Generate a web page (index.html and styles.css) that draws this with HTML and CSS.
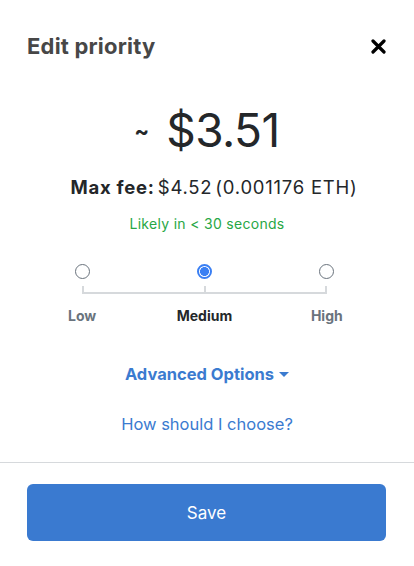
FILE: index.html
```html
<!DOCTYPE html>
<html>
<head>
<meta charset="utf-8">
<link rel="stylesheet" href="styles.css">
</head>
<body>
<div class="popover">
  <div class="header">
    <h2 class="title">Edit priority</h2>
    <button class="close" aria-label="Close">
      <svg width="15" height="15" viewBox="0 0 15 15"><path d="M2 2 L13 13 M13 2 L2 13" stroke="#000" stroke-width="3.2" stroke-linecap="round"/></svg>
    </button>
  </div>
  <div class="content">
    <div class="price"><span class="tilde">~</span><span class="amount">$3.51</span></div>
    <div class="fee"><span class="fee-label">Max fee:</span><span class="fee-val">$4.52</span><span class="fee-eth">(0.001176 ETH)</span></div>
    <div class="likely">Likely in &lt; 30 seconds</div>
    <div class="slider">
      <div class="radios">
        <div class="cell"><span class="radio"></span></div>
        <div class="cell"><span class="radio checked"></span></div>
        <div class="cell"><span class="radio"></span></div>
      </div>
      <div class="track"></div>
      <div class="labels">
        <div class="lbl">Low</div>
        <div class="lbl active">Medium</div>
        <div class="lbl">High</div>
      </div>
    </div>
    <div class="advanced">Advanced Options <span class="caret"></span></div>
    <div class="how">How should I choose?</div>
  </div>
  <div class="footer">
    <button class="save">Save</button>
  </div>
</div>
</body>
</html>
```
FILE: styles.css
```css
* { box-sizing: border-box; }
html, body { margin: 0; padding: 0; background: #fff; }
body { font-family: Inter, "Noto Sans", sans-serif; color: #24272a; width: 414px; height: 566px; overflow: hidden; }
.popover { display: flex; flex-direction: column; }
.header { display: flex; justify-content: space-between; align-items: center; padding: 32px 28px 0 27px; }
.title { margin: 0; font-size: 22px; font-weight: 700; color: #474747; letter-spacing: 0.2px; line-height: 28px; }
.close { border: 0; background: none; padding: 0; width: 15px; height: 15px; display: flex; }
.content { display: flex; flex-direction: column; align-items: center; }
.price { display: flex; align-items: baseline; margin-top: 44px; height: 52px; }
.tilde { font-size: 22px; font-weight: 700; margin-right: 17px; position: relative; top: -8px; }
.amount { font-size: 46px; font-weight: 400; line-height: 52px; letter-spacing: -0.5px; }
.fee { margin-top: 20px; margin-left: 14px; font-size: 18.5px; line-height: 22px; display: flex; gap: 3px; letter-spacing: 0.75px; }
.fee-label { font-weight: 700; }
.likely { margin-top: 17px; font-size: 14px; color: #28a745; line-height: 18px; letter-spacing: 0.3px; }
.slider { align-self: flex-start; margin-left: 21px; width: 367px; margin-top: 31px; }
.radios, .labels { display: grid; grid-template-columns: repeat(3, 1fr); }
.cell { display: flex; justify-content: center; }
.radio { width: 15px; height: 15px; border: 1.5px solid #6a737d; border-radius: 50%; display: block; }
.radio.checked { border: 2px solid #3a7ff3; background: radial-gradient(circle, #3a7ff3 0 4.2px, #fff 4.7px); }
.track { margin: 7px 61px 0; height: 8px; border: 2px solid #d6d9dc; border-top: 0; position: relative; }
.track::after { content: ""; position: absolute; left: 50%; top: 0; width: 2px; height: 8px; margin-left: -1px; background: #d6d9dc; }
.labels { margin-top: 13px; }
.lbl { text-align: center; font-size: 14px; font-weight: 700; color: #6a737d; line-height: 18px; }
.lbl.active { color: #24272a; }
.advanced { margin-top: 39px; color: #3b7bd0; font-size: 16.5px; font-weight: 700; line-height: 20px; display: flex; align-items: center; }
.caret { width: 0; height: 0; border-left: 5px solid transparent; border-right: 5px solid transparent; border-top: 5px solid #3b7bd0; margin-left: 5px; }
.how { margin-top: 30px; color: #3b7bd0; font-size: 16.5px; line-height: 20px; }
.footer { margin-top: 28px; border-top: 1px solid #d6d9dc; padding: 21px 28px 0 27px; }
.save { width: 100%; height: 57px; border: 0; border-radius: 6px; background: #3a7ad0; color: #fff; font-family: inherit; font-size: 17px; }
```
